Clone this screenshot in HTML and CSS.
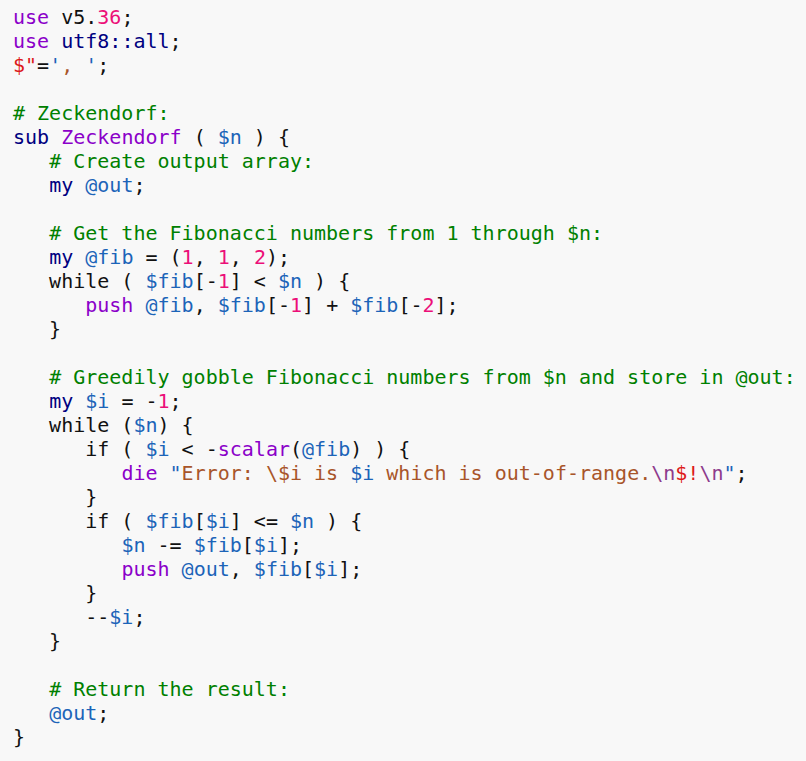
FILE: index.html
```html
<!DOCTYPE html>
<html>
<head>
<meta charset="utf-8">
<link rel="stylesheet" href="styles.css">
</head>
<body>
<pre class="code"><span class="kw">use</span> v5.<span class="num">36</span>;
<span class="kw">use</span> <span class="nv">utf8::all</span>;
<span class="sv">$"</span>=<span class="q">'</span><span class="str">, </span><span class="q">'</span>;

<span class="cm"># Zeckendorf:</span>
<span class="nv">sub</span> <span class="kw">Zeckendorf</span> ( <span class="var">$n</span> ) {
   <span class="cm"># Create output array:</span>
   <span class="nv">my</span> <span class="var">@out</span>;

   <span class="cm"># Get the Fibonacci numbers from 1 through $n:</span>
   <span class="nv">my</span> <span class="var">@fib</span> = (<span class="num">1</span>, <span class="num">1</span>, <span class="num">2</span>);
   while ( <span class="var">$fib</span>[-<span class="num">1</span>] &lt; <span class="var">$n</span> ) {
      <span class="kw">push</span> <span class="var">@fib</span>, <span class="var">$fib</span>[-<span class="num">1</span>] + <span class="var">$fib</span>[-<span class="num">2</span>];
   }

   <span class="cm"># Greedily gobble Fibonacci numbers from $n and store in @out:</span>
   <span class="nv">my</span> <span class="var">$i</span> = -<span class="num">1</span>;
   while (<span class="var">$n</span>) {
      if ( <span class="var">$i</span> &lt; -<span class="kw">scalar</span>(<span class="var">@fib</span>) ) {
         <span class="kw">die</span> <span class="q">"</span><span class="str">Error: \$i is </span><span class="var">$i</span><span class="str"> which is out-of-range.</span><span class="esc">\n</span><span class="sv">$!</span><span class="esc">\n</span><span class="q">"</span>;
      }
      if ( <span class="var">$fib</span>[<span class="var">$i</span>] &lt;= <span class="var">$n</span> ) {
         <span class="var">$n</span> -= <span class="var">$fib</span>[<span class="var">$i</span>];
         <span class="kw">push</span> <span class="var">@out</span>, <span class="var">$fib</span>[<span class="var">$i</span>];
      }
      --<span class="var">$i</span>;
   }

   <span class="cm"># Return the result:</span>
   <span class="var">@out</span>;
}</pre>
</body>
</html>
```
FILE: styles.css
```css
html, body {
  margin: 0;
  padding: 0;
  background: #f8f8f8;
}
.code {
  margin: 0;
  padding: 5px 13px;
  font-family: "DejaVu Sans Mono", monospace;
  font-size: 20px;
  line-height: 24px;
  color: #111;
  background: #f8f8f8;
}
.kw { color: #8b00c9; }
.nv { color: #000080; }
.var { color: #1c64b8; }
.num { color: #ec0f78; }
.cm { color: #008000; }
.str { color: #a8552a; }
.q { color: #1c64b8; }
.esc { color: #8e3b8c; }
.sv { color: #dd1a1a; }
```
